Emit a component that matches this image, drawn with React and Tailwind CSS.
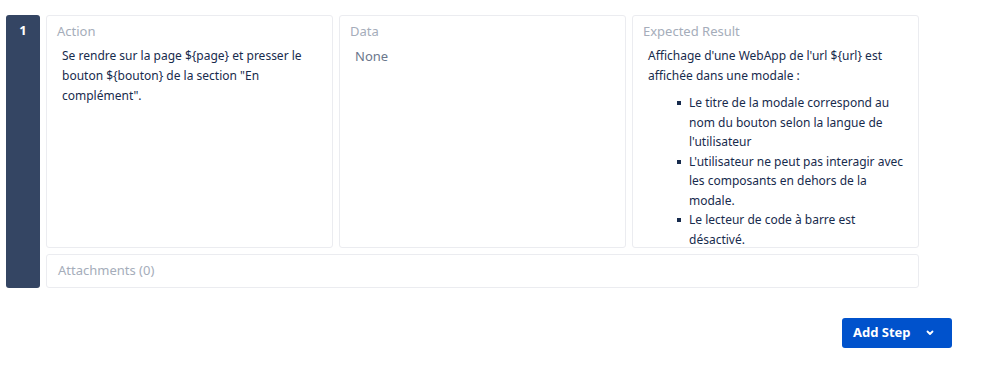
import React from 'react';

const font = { fontFamily: '"Noto Sans", "Open Sans", sans-serif' };

const Card = ({ label, children }) => (
  <div className="flex-1 min-w-0 bg-white border border-[#ebecf0] rounded-[3px] pl-[10px] pr-3 pt-[5px]">
    <div className="text-[13px] leading-[20px] text-[#a5adba]">{label}</div>
    <div className="pl-[5px] pt-[5px] text-[12px] leading-[20px] text-[#172b4d]">{children}</div>
  </div>
);

const bullets = [
  "Le titre de la modale correspond au nom du bouton selon la langue de l'utilisateur",
  "L'utilisateur ne peut pas interagir avec les composants en dehors de la modale.",
  'Le lecteur de code à barre est désactivé.',
];

export default function App() {
  return (
    <div className="w-[998px] h-[368px] bg-white" style={font}>
      <div className="flex pt-[15px] pl-[6px]">
        <div className="w-[34px] h-[273px] bg-[#344563] rounded-[3px] flex justify-center pt-[5px]">
          <span className="text-white text-[13px] font-bold leading-[20px]">1</span>
        </div>
        <div className="ml-[6px] w-[873px] flex flex-col gap-[6px]">
          <div className="flex gap-[6px] h-[233px]">
            <Card label="Action">
              {'Se rendre sur la page ${page} et presser le bouton ${bouton} de la section "En complément".'}
            </Card>
            <Card label="Data">
              <span className="text-[#6b778c] text-[13px]">None</span>
            </Card>
            <Card label="Expected Result">
              <p>{"Affichage d'une WebApp de l'url ${url} est affichée dans une modale :"}</p>
              <ul className="mt-[7px] pl-[41px] leading-[19.5px]">
                {bullets.map((t, i) => (
                  <li key={i} className="relative">
                    <span className="absolute -left-[12px] top-[8px] w-[4px] h-[4px] bg-[#172b4d]" />
                    {t}
                  </li>
                ))}
              </ul>
            </Card>
          </div>
          <div className="h-[34px] bg-white border border-[#ebecf0] rounded-[3px] pl-[11px] flex items-center">
            <span className="text-[13px] text-[#a5adba]">Attachments (0)</span>
          </div>
        </div>
      </div>
      <div className="flex justify-end pr-[46px] mt-[30px]">
        <button className="h-[30px] w-[110px] bg-[#0052cc] rounded-[3px] text-white text-[13px] font-bold flex items-center pl-[11px]">
          Add Step
          <svg className="ml-[14px]" width="10" height="10" viewBox="0 0 10 10">
            <path d="M2.5 3.5 L5 6 L7.5 3.5" stroke="white" strokeWidth="1.8" fill="none" strokeLinecap="round" strokeLinejoin="round" />
          </svg>
        </button>
      </div>
    </div>
  );
}
